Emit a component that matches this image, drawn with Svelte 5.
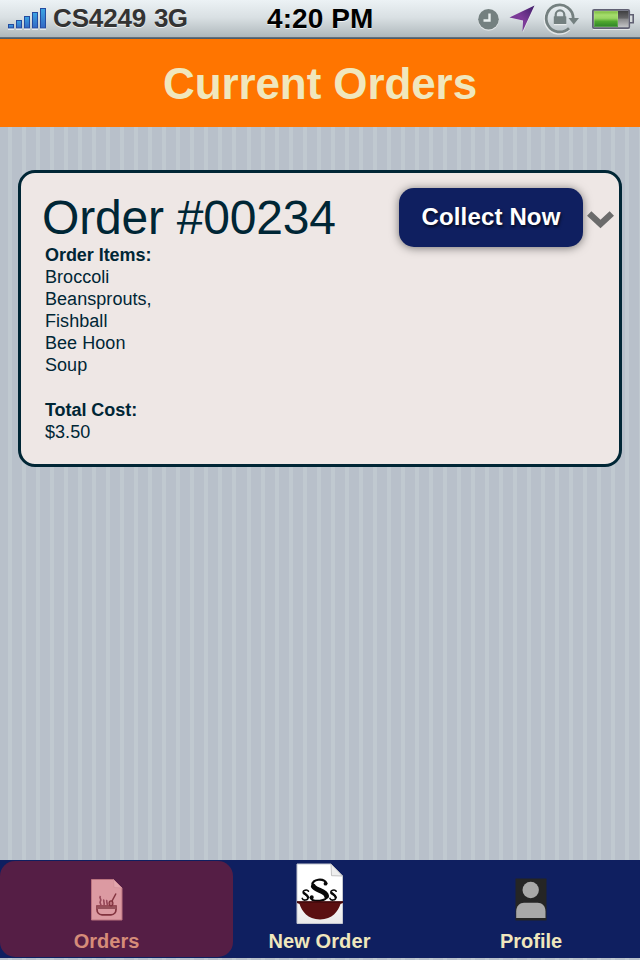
<script>
  const items = ['Broccoli', 'Beansprouts,', 'Fishball', 'Bee Hoon', 'Soup'];
  const bars = [4, 8, 12, 16, 20];
</script>

<div class="screen">
  <div class="status">
    <svg class="signal" width="40" height="22" viewBox="0 0 40 22">
      <defs>
        <linearGradient id="sig" x1="0" y1="0" x2="0" y2="1">
          <stop offset="0" stop-color="#3ba5e4" /><stop offset="1" stop-color="#3468c4" />
        </linearGradient>
      </defs>
      {#each bars as h, i}
        <rect x={i * 8} y={21 - h} width="6" height={h + 1} fill="#fff" opacity=".6" />
        <rect x={i * 8 + 0.5} y={20.5 - h} width="5" height={h - 1 + 0.4} fill="url(#sig)" stroke="#244ba0" />
      {/each}
    </svg>
    <span class="carrier">CS4249</span>
    <span class="net">3G</span>
    <span class="time">4:20 PM</span>
    <svg class="indicators" width="160" height="38" viewBox="476 0 160 38">
      <defs>
        <linearGradient id="arrow" x1="1" y1="0" x2="0" y2="1">
          <stop offset="0" stop-color="#3f1d68" /><stop offset=".5" stop-color="#7d3c99" /><stop offset="1" stop-color="#6b3290" />
        </linearGradient>
        <linearGradient id="charge" x1="0" y1="0" x2="0" y2="1">
          <stop offset="0" stop-color="#78b83c" /><stop offset=".25" stop-color="#a5dc6c" /><stop offset=".45" stop-color="#9ad562" />
          <stop offset=".65" stop-color="#50a82f" /><stop offset="1" stop-color="#2c8128" />
        </linearGradient>
        <linearGradient id="spent" x1="0" y1="0" x2="0" y2="1">
          <stop offset="0" stop-color="#3f3f41" /><stop offset=".45" stop-color="#666668" /><stop offset=".5" stop-color="#88888a" /><stop offset="1" stop-color="#c2c3c5" />
        </linearGradient>
      </defs>
      <circle cx="488.5" cy="20.5" r="10.3" fill="#fff" opacity=".55" />
      <circle cx="488.5" cy="19.3" r="10.3" fill="#748080" />
      <path d="M489.500 13.500V20.500h-6" fill="none" stroke="#e8eeee" stroke-width="2.400" />
      <path d="M534.500 6.500 510 18l12.500 2.500L523 32.500Z" fill="#fff" opacity=".55" />
      <path d="M534.500 5.500 509.500 17.500l13.500 3L522.500 31.500Z" fill="url(#arrow)" />
      <g fill="none" stroke="#fff" stroke-width="3" opacity=".6"><path d="M569.200 29.200A14 14 0 1 1 573.300 19" /></g>
      <path d="M569 28.200A13.500 13.500 0 1 1 573.200 18" fill="none" stroke="#748080" stroke-width="2.800" />
      <path d="M568.500 18h10.500l-5.250 6.500Z" fill="#748080" />
      <path d="M555.700 17v-2.300a4.300 4.300 0 0 1 8.600 0V17" fill="none" stroke="#748080" stroke-width="2.200" />
      <rect x="553.800" y="16.200" width="12.500" height="7.800" rx=".6" fill="#748080" />
      <path d="M554 24.700h12.500" stroke="#fff" opacity=".7" />
      <path d="M593 29.500h37" stroke="#fff" opacity=".6" />
      <rect x="592.900" y="9.900" width="36.300" height="18.200" rx="1.200" fill="#c6cece" stroke="#606073" stroke-width="1.800" />
      <path d="M630 14.800h3.200v8h-3.200" fill="#d6dcdd" stroke="#606073" stroke-width="1.600" />
      <rect x="594" y="11" width="24" height="16" fill="url(#charge)" />
      <rect x="594.500" y="11.500" width="23" height="15" fill="none" stroke="#c8e7a7" stroke-opacity=".25" />
      <rect x="618" y="11" width="10.500" height="16" fill="url(#spent)" />
    </svg>
  </div>

  <header><h1>Current Orders</h1></header>

  <main>
    <section class="card">
      <div class="info">
        <h2>Order #00234</h2>
        <div class="details">
          <b>Order Items:</b>
          {#each items as item}<div>{item}</div>{/each}
          <b class="total">Total Cost:</b>
          <div>$3.50</div>
        </div>
      </div>
      <button>Collect Now</button>
      <svg class="chevron" width="27" height="18" viewBox="0 0 27 18">
        <path d="M2.200 2.500 13.500 13 24.800 2.500" fill="none" stroke="#6b6b6b" stroke-width="6.400" />
      </svg>
    </section>
  </main>

  <nav>
    <div class="tab active">
      <svg width="32" height="42" viewBox="0 0 32 42">
        <path d="M.5.500H22.500L31 9V41H.5Z" fill="#dc9aa2" stroke="#ba737f" />
        <path d="M22.500.500 23 8.500 31 9Z" fill="#e3a6ad" stroke="#cf8e97" stroke-width=".6" />
        <path d="M6 27h19v3.500c0 3-2 5.300-5 5.300h-9c-3 0-5-2.300-5-5.300Z" fill="none" stroke="#82333f" stroke-width="1.700" />
        <path d="M5.500 27.200h20v2.800h-20Z" fill="#96515b" />
        <path d="M9.500 17c-2 2 1.500 3 0 5s.8 2.800.3 4.300M13 20.500c-1 1.500.8 3 0 5.500M16 21c-1 1.300.5 3 .2 5" fill="none" stroke="#96495a" stroke-width="1.700" />
        <path d="m25 14.500-4.500 8.500" fill="none" stroke="#82333f" stroke-width="1.500" />
        <ellipse cx="20" cy="24.300" rx="1.900" ry="2.500" fill="#bd737d" stroke="#82333f" stroke-width="1.300" />
      </svg>
      <span>Orders</span>
    </div>
    <div class="tab new">
      <svg width="48" height="62" viewBox="0 0 48 62">
        <defs>
          <linearGradient id="paper" x1="0" y1="0" x2="0" y2="1"><stop offset=".5" stop-color="#fff" /><stop offset="1" stop-color="#e9e9e9" /></linearGradient>
        </defs>
        <path d="M1 1H35L46.500 13V60.500H1Z" fill="url(#paper)" stroke="#c4c7d0" />
        <path d="M35 1 35.500 12.700 46.500 13Z" fill="#eee" stroke="#b5b5b5" stroke-width=".8" />
        <g fill="none" stroke="#090909" stroke-linecap="round">
          <path d="M30.500 20.500C28 14.500 15.500 16 16.500 22c.6 3.600 14.300 5 14.800 10.500.5 6-15 7.500-16.800 2" stroke-width="2.200" />
          <path d="M17.500 23.500C20 27.500 30 28 30.500 33" stroke-width="5" />
          <circle cx="29.500" cy="20.700" r="1" stroke-width="1.800" />
          <circle cx="15.800" cy="34.200" r="1" stroke-width="1.900" />
          <path d="M12.500 28.200c-1.500-2.200-6-.8-5.200 1.300.6 1.700 4.600 2.500 4.800 5 .1 3-5.200 3.500-5.900.9" stroke-width="1.600" />
          <path d="M7.800 30c1.500 1.300 3.700 2.200 4.200 4.200" stroke-width="2.400" />
          <path d="M40.200 28.200c-1.500-2.200-6-.8-5.200 1.300.6 1.700 4.600 2.500 4.800 5 .1 3-5.200 3.500-5.900.9" stroke-width="1.600" />
          <path d="M35.500 30c1.500 1.300 3.700 2.200 4.200 4.200" stroke-width="2.400" />
        </g>
        <path d="M1 38.500H47V40L44.500 41C42 48 36.500 56.500 24 56.500S6 48 3.500 41L1 40Z" fill="#5b1011" />
        <path d="M1 39H47" stroke="#40090b" stroke-width="1.400" />
      </svg>
      <span>New Order</span>
    </div>
    <div class="tab profile">
      <svg width="32" height="43" viewBox="0 0 32 43">
        <rect x=".5" y=".5" width="31" height="42" fill="#252525" />
        <ellipse cx="15.700" cy="12" rx="8.200" ry="8.200" fill="#a8a8a8" />
        <path d="M1.200 40V33.500C1.200 28 5 24.700 9 24.700H22.500c4.500 0 8 3.300 8 8.800V40Z" fill="#a8a8a8" />
      </svg>
      <span>Profile</span>
    </div>
  </nav>
</div>

<style>
  :global(body) { margin: 0; }
  .screen {
    width: 640px;
    height: 960px;
    overflow: hidden;
    display: flex;
    flex-direction: column;
    font-family: "Liberation Sans", Arial, sans-serif;
    background: repeating-linear-gradient(90deg, #b8c0ca 0 8px, #c0c9d0 8px 12px, #b8c0ca 12px 14.03px);
  }
  .status {
    box-sizing: border-box;
    height: 39px;
    display: flex;
    align-items: flex-start;
    background: linear-gradient(#ecf2f5, #d9e0e3 45%, #afb8bc 37px, #6d7a86 37px, #46535f);
    font-weight: bold;
    color: #333;
    text-shadow: 0 1px 0 rgba(255, 255, 255, .7);
    font-size: 26px;
    line-height: 36px;
    white-space: nowrap;
  }
  .signal { margin: 8px 5px 0 8px; }
  .carrier { width: 101px; letter-spacing: -.15px; }
  .net { width: 113px; letter-spacing: -.7px; }
  .time { color: #000; font-size: 28px; line-height: 38px; width: 209px; letter-spacing: .1px; }
  header {
    height: 88px;
    background: #ff7500;
    display: flex;
    justify-content: center;
  }
  h1 {
    margin: 0;
    font-size: 44px;
    line-height: 90px;
    letter-spacing: -.1px;
    color: #f0e7bd;
  }
  main { flex: 1; padding: 43px 18px 0; }
  .card {
    box-sizing: border-box;
    height: 297px;
    border: 3px solid #002635;
    border-radius: 17px;
    background: #eee7e5;
    color: #002635;
    display: flex;
    align-items: flex-start;
  }
  .info { width: 378px; padding: 15px 0 0 21px; box-sizing: border-box; }
  h2 { margin: 0; font-weight: normal; font-size: 48px; line-height: 56px; padding-top: 2px; margin-bottom: -2px; letter-spacing: -.2px; white-space: nowrap; }
  .details { padding-left: 3px; font-size: 18px; line-height: 22px; letter-spacing: .05px; }
  .details b { display: block; letter-spacing: -.05px; }
  .details .total { margin-top: 23px; }
  button {
    width: 184px;
    height: 59px;
    margin: 15px 4px 0 0;
    padding: 0 0 2px;
    border: 0;
    border-radius: 15px;
    background: #0f1f60;
    color: #fff;
    font: bold 24px "Liberation Sans", Arial, sans-serif;
    letter-spacing: .15px;
    white-space: nowrap;
    text-shadow: 1px 2px 3px rgba(0, 0, 0, .7);
    box-shadow: 0 1px 10px rgba(0, 0, 0, .5);
  }
  .chevron { margin-top: 38px; flex: none; }
  nav {
    height: 98px;
    margin-bottom: 2px;
    background: #0f1f60;
    display: flex;
  }
  .tab {
    box-sizing: border-box;
    width: 213px;
    height: 96px;
    margin-top: 1px;
    display: flex;
    flex-direction: column;
    align-items: center;
    justify-content: flex-end;
    padding-bottom: 4px;
    color: #f0e7bd;
    font-size: 20px;
    font-weight: bold;
    line-height: 24px;
  }
  .tab svg { margin-bottom: 8px; }
  .active { width: 233px; margin-right: -20px; padding-right: 20px; border-radius: 15px; background: #551e45; color: #d68c79; }
  .new { letter-spacing: .1px; }
  .new svg { margin-bottom: 4px; }
  .profile { padding-right: 3px; }
</style>
